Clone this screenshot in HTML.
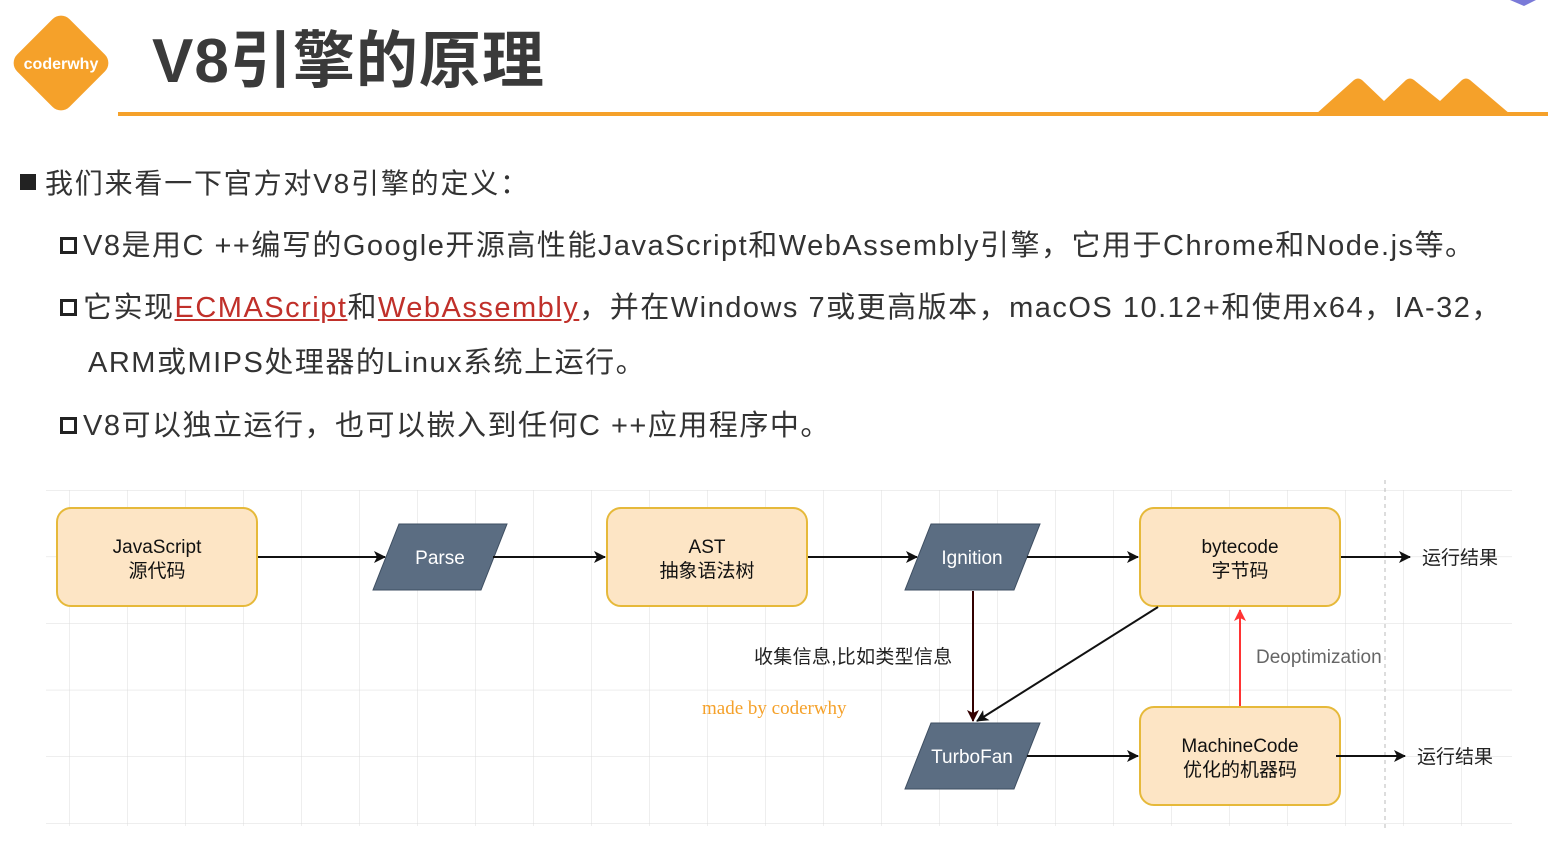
<!DOCTYPE html>
<html><head><meta charset="utf-8"><style>
body{margin:0;width:1548px;height:864px;background:#fff;overflow:hidden;position:relative;font-family:"Liberation Sans","Noto Sans CJK SC",sans-serif;}
.t{position:absolute;white-space:nowrap;color:#333;}
.sq{display:inline-block;width:17px;height:17px;border:3px solid #222;box-sizing:border-box;margin-right:6px;vertical-align:1px}
.b{font-size:29px;letter-spacing:1.5px}
a{color:#c0302a;text-decoration:underline}
</style></head><body>
<svg width="1548" height="864" style="position:absolute;left:0;top:0">
<defs>
<pattern id="g" x="11" y="490" width="58" height="66.6" patternUnits="userSpaceOnUse">
<path d="M0 0V66.6M0 0H58" stroke="#dcdcdc" stroke-width="1" fill="none"/></pattern>
<marker id="ar" markerWidth="12" markerHeight="12" refX="11" refY="6" orient="auto" markerUnits="userSpaceOnUse"><path d="M0 0L12 6L0 12L3 6Z" fill="#111"/></marker>
<marker id="arr" markerWidth="12" markerHeight="12" refX="11" refY="6" orient="auto" markerUnits="userSpaceOnUse"><path d="M0 0L12 6L0 12L3 6Z" fill="#f33"/></marker>
<marker id="ard" markerWidth="12" markerHeight="12" refX="11" refY="6" orient="auto" markerUnits="userSpaceOnUse"><path d="M0 0L12 6L0 12L3 6Z" fill="#300"/></marker>
</defs>
<rect x="24" y="26" width="74" height="74" rx="12" transform="rotate(45 61 63)" fill="#f5a12a"/>
<text x="61" y="69" font-size="16" font-weight="bold" fill="#fff" text-anchor="middle" font-family="Liberation Sans">coderwhy</text>
<rect x="118" y="112" width="1430" height="4" fill="#f5a12a"/>
<path d="M1316 114L1354 80Q1358 77 1362 80L1384 101L1406 80Q1410 77 1414 80L1440 101L1462 80Q1466 77 1470 80L1510 114Z" fill="#f5a12a"/>
<path d="M1510 0L1524 6L1536 0Z" fill="#7a7ad8"/>
<rect x="46" y="490" width="1466" height="336" fill="url(#g)"/>
<line x1="1385" y1="480" x2="1385" y2="828" stroke="#bbb" stroke-dasharray="4 4"/>
<g fill="#fde5c5" stroke="#e6b93a" stroke-width="2">
<rect x="57" y="508" width="200" height="98" rx="14"/>
<rect x="607" y="508" width="200" height="98" rx="14"/>
<rect x="1140" y="508" width="200" height="98" rx="14"/>
<rect x="1140" y="707" width="200" height="98" rx="14"/>
</g>
<g fill="#5b6d82" stroke="#3e4e61" stroke-width="1">
<path d="M399 524H507L481 590H373Z"/>
<path d="M931 524H1040L1014 590H905Z"/>
<path d="M931 723H1040L1014 789H905Z"/>
</g>
<g stroke="#111" stroke-width="2" fill="none" marker-end="url(#ar)">
<line x1="258" y1="557" x2="385" y2="557"/>
<line x1="493" y1="557" x2="605" y2="557"/>
<line x1="808" y1="557" x2="917" y2="557"/>
<line x1="1027" y1="557" x2="1138" y2="557"/>
<line x1="1341" y1="557" x2="1410" y2="557"/>
<line x1="1027" y1="756" x2="1138" y2="756"/>
<line x1="1336" y1="756" x2="1405" y2="756"/>
<line x1="1158" y1="607" x2="977" y2="721"/>
</g>
<line x1="973" y1="591" x2="973" y2="721" stroke="#300" stroke-width="2" marker-end="url(#ard)"/>
<line x1="1240" y1="706" x2="1240" y2="610" stroke="#f33" stroke-width="2" marker-end="url(#arr)"/>
<g font-size="19" fill="#111" text-anchor="middle">
<text x="157" y="553">JavaScript</text><text x="157" y="577">源代码</text>
<text x="707" y="553">AST</text><text x="707" y="577">抽象语法树</text>
<text x="1240" y="553">bytecode</text><text x="1240" y="577">字节码</text>
<text x="1240" y="752">MachineCode</text><text x="1240" y="776">优化的机器码</text>
</g>
<g font-size="19" fill="#fff" text-anchor="middle">
<text x="440" y="564">Parse</text><text x="972" y="564">Ignition</text><text x="972" y="763">TurboFan</text>
</g>
<g font-size="19" fill="#222">
<text x="1422" y="564">运行结果</text><text x="1417" y="763">运行结果</text>
<text x="754" y="663" letter-spacing="0.3">收集信息,比如类型信息</text>
</g>
<text x="1256" y="663" font-size="19" fill="#666">Deoptimization</text>
<text x="702" y="714" font-size="19" fill="#f5a12a" font-family="Liberation Serif">made by coderwhy</text>
</svg>
<div class="t" style="left:152px;top:10px;font-size:62px;font-weight:bold;color:#3a3a3a;letter-spacing:1px">V8引擎的原理</div>
<div class="t" style="left:20px;top:162px;font-size:28px;letter-spacing:1.8px"><span style="display:inline-block;width:16px;height:16px;background:#222;margin-right:9px;vertical-align:3px"></span>我们来看一下官方对V8引擎的定义：</div>
<div class="t b" style="left:60px;top:222px"><span class="sq"></span>V8是用C ++编写的Google开源高性能JavaScript和WebAssembly引擎，它用于Chrome和Node.js等。</div>
<div class="t b" style="left:60px;top:284px"><span class="sq"></span>它实现<a>ECMAScript</a>和<a>WebAssembly</a>，并在Windows 7或更高版本，macOS 10.12+和使用x64，IA-32，</div>
<div class="t b" style="left:88px;top:339px">ARM或MIPS处理器的Linux系统上运行。</div>
<div class="t b" style="left:60px;top:402px"><span class="sq"></span>V8可以独立运行，也可以嵌入到任何C ++应用程序中。</div>
</body></html>
